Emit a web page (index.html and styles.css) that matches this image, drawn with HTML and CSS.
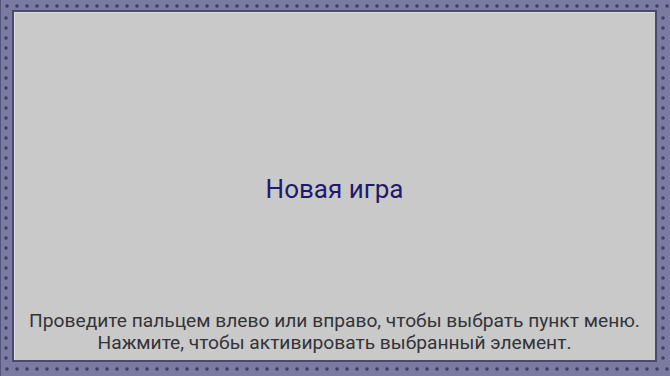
FILE: index.html
```html
<!DOCTYPE html>
<html lang="ru">
<head>
<meta charset="utf-8">
<link rel="stylesheet" href="styles.css">
</head>
<body>
<div class="frame">
  <div class="strip top"></div>
  <div class="strip left"></div>
  <main class="screen">
    <h1 class="title">Новая игра</h1>
    <p class="help">Проведите пальцем влево или вправо, чтобы выбрать пункт меню.<br>Нажмите, чтобы активировать выбранный элемент.</p>
  </main>
  <div class="strip right"></div>
  <div class="strip bottom"></div>
</div>
</body>
</html>
```
FILE: styles.css
```css
html, body {
  margin: 0;
  padding: 0;
}
body {
  width: 670px;
  height: 376px;
  overflow: hidden;
  font-family: Roboto, "Noto Sans", sans-serif;
}
.frame {
  display: grid;
  grid-template-columns: 11px 1fr 13px;
  grid-template-rows: 10px 1fr 14px;
  grid-template-areas:
    "top top top"
    "left screen right"
    "bottom bottom bottom";
  width: 670px;
  height: 376px;
  background: #7b7aa1;
  box-sizing: border-box;
  border-left: 1px solid #56557a;
}
.strip {
  background-image: radial-gradient(circle, #3e3c68 1.1px, rgba(62,60,104,0.45) 1.7px, transparent 2.3px);
  background-size: 10px 10px;
}
.top {
  grid-area: top;
  background-position: 1px 1px;
}
.left {
  grid-area: left;
  background-position: 0px 3px;
}
.right {
  grid-area: right;
  background-position: 1px 3px;
}
.bottom {
  grid-area: bottom;
  background-position: 1px 2px;
}
.screen {
  grid-area: screen;
  display: grid;
  grid-template-areas: "stack";
  background: #c9c9c9;
  border: 2px solid #4b4a6c;
  box-shadow: inset 1px 1px 0 #dcdce0;
  min-height: 0;
}
.title {
  grid-area: stack;
  align-self: center;
  justify-self: center;
  margin: 0;
  padding-top: 5px;
  font-weight: 400;
  font-size: 26px;
  color: #1f1a6e;
}
.help {
  grid-area: stack;
  align-self: end;
  justify-self: center;
  margin: 0 0 6px 0;
  text-align: center;
  font-size: 19.2px;
  line-height: 22px;
  color: #333338;
}
```
